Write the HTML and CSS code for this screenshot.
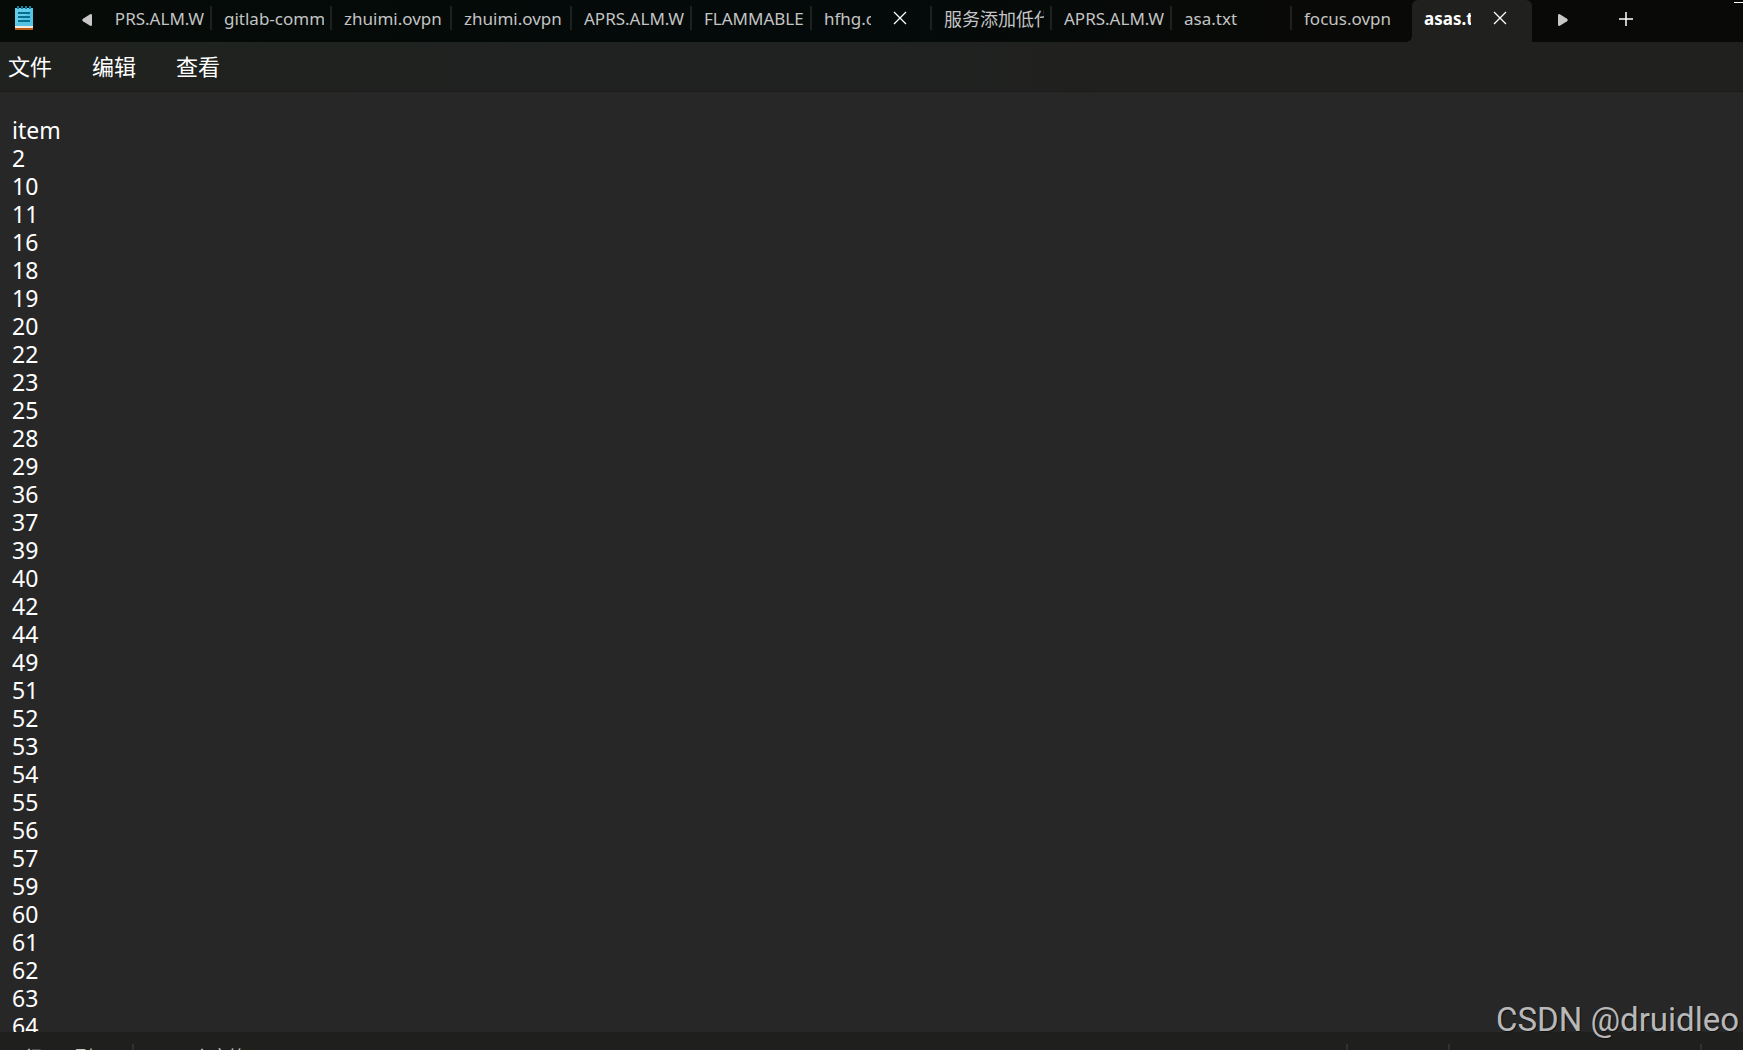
FILE: index.html
```html
<!DOCTYPE html>
<html lang="zh-CN">
<head>
  <meta charset="UTF-8" />
  <meta name="viewport" content="width=device-width, initial-scale=1" />
  <title>asas.txt</title>
  <link rel="stylesheet" href="styles.css">
</head>
<body>

<header class="titlebar">
  <div class="titlebar-left">
    <svg class="app-icon" width="18" height="24" viewBox="0 0 18 24" aria-hidden="true">
      <rect x="0" y="2" width="18" height="18" fill="#55c4e4" />
      <path d="M0 2h18L0 20z" fill="#6fd3ee" opacity="0.6" />
      <path d="M2 0h2v3H2zM6 0h2v3H6zM10 0h2v3h-2zM14 0h2v3h-2z" fill="#0c7fa3" />
      <path d="M3 6h12v2H3zM3 10h12v2H3zM3 14h12v2H3z" fill="#07708f" />
      <rect x="0" y="20" width="18" height="2" fill="#f3e9e2" />
      <rect x="0" y="22" width="18" height="2" fill="#b9560f" />
    </svg>
    <button class="icon-button" aria-label="Scroll tabs left">
      <svg width="10" height="12" viewBox="0 0 10 12"><path d="M10 1v10q0 1-1.500 1L1 7.200Q-.5 6 1 4.800L8.500 0Q10 0 10 1z" fill="#c8c8c8" /></svg>
    </button>
  </div>

  <nav class="tabs">
    <div class="tab"><button class="tab-name">APRS.ALM.WX</button></div>
    <div class="tab"><button class="tab-name">gitlab-comm</button></div>
    <div class="tab"><button class="tab-name">zhuimi.ovpn</button></div>
    <div class="tab"><button class="tab-name">zhuimi.ovpn</button></div>
    <div class="tab"><button class="tab-name">APRS.ALM.WX</button></div>
    <div class="tab"><button class="tab-name">FLAMMABLE</button></div>
    <div class="tab tab-closable">
      <button class="tab-name">hfhg.conf</button>
      <button class="icon-button" aria-label="Close hfhg">
        <svg width="14" height="14" viewBox="0 0 14 14"><path d="M1 1l12 12M13 1L1 13" stroke="#fff" stroke-width="1.300" /></svg>
      </button>
    </div>
    <div class="tab"><button class="tab-name tab-name-zh">服务添加低代</button></div>
    <div class="tab"><button class="tab-name">APRS.ALM.WX</button></div>
    <div class="tab"><button class="tab-name">asa.txt</button></div>
    <div class="tab tab-last"><button class="tab-name">focus.ovpn</button></div>
    <div class="tab tab-closable tab-active">
      <button class="tab-name">asas.txt</button>
      <button class="icon-button" aria-label="Close asas.txt">
        <svg width="14" height="14" viewBox="0 0 14 14"><path d="M1 1l12 12M13 1L1 13" stroke="#fff" stroke-width="1.300" /></svg>
      </button>
    </div>
  </nav>

  <div class="titlebar-right">
    <button class="icon-button" aria-label="Scroll tabs right">
      <svg width="10" height="12" viewBox="0 0 10 12"><path d="M0 1v10q0 1 1.500 1L9 7.200Q10.500 6 9 4.800L1.500 0Q0 0 0 1z" fill="#c8c8c8" /></svg>
    </button>
    <button class="icon-button" aria-label="New tab">
      <svg width="16" height="16" viewBox="0 0 16 16"><path d="M8 1v14M1 8h14" stroke="#fff" stroke-width="1.500" /></svg>
    </button>
    <button class="minimize" aria-label="Minimize"></button>
  </div>
</header>

<nav class="menubar">
  <button>文件</button>
  <button>编辑</button>
  <button>查看</button>
</nav>

<textarea class="editor" aria-label="asas.txt" spellcheck="false">
item
2
10
11
16
18
19
20
22
23
25
28
29
36
37
39
40
42
44
49
51
52
53
54
55
56
57
59
60
61
62
63
64</textarea>

<footer class="statusbar">
  <span class="status status-position">行 1，列 1</span>
  <span class="status status-count">1289 个字符</span>
  <span class="status status-zoom"></span>
  <span class="status status-eol"></span>
  <span class="status status-encoding"></span>
</footer>

<div class="watermark">CSDN @druidleo</div>

</body>
</html>
```
FILE: styles.css
```css
* {
  box-sizing: border-box;
}
body {
  font-family: 'Noto Sans', 'Noto Sans CJK SC', sans-serif;
  background: #272727;
  color: #fff;
  margin: 0;
  height: 100vh;
  display: flex;
  flex-direction: column;
  overflow: hidden;
}
button {
  font: inherit;
  color: inherit;
  background: none;
  border: 0;
  padding: 0;
}
.icon-button {
  display: flex;
}

/* title bar with tabs */
.titlebar {
  flex: 0 0 42px;
  display: flex;
  background: linear-gradient(to right, #060b08, #040a0a 50%, #090a07 75%, #090a07);
}
.titlebar-left {
  flex: 0 0 115px;
  display: flex;
  align-items: flex-start;
  gap: 19px;
  padding: 6px 0 0 15px;
}
.titlebar-left .icon-button {
  padding: 8px 0 8px 30px;
}
.tabs {
  flex: 1;
  min-width: 0;
  display: flex;
  justify-content: flex-end;
  overflow: hidden;
}
.tab {
  flex: 0 0 120px;
  min-width: 0;
  display: flex;
  align-items: flex-start;
  padding: 6px 8px 0 12px;
  background: linear-gradient(#1f2120, #1f2120) right 6px / 2px 24px no-repeat;
}
.tab-name {
  flex: 1;
  min-width: 0;
  overflow: hidden;
  white-space: nowrap;
  text-align: left;
  font-size: 17px;
  line-height: 26px;
  color: #c3c4c3;
}
.tab-name-zh {
  font-size: 18px;
}
.tab-closable {
  padding-right: 25px;
}
.tab-closable .tab-name {
  margin-right: 22px;
}
.tab-closable .icon-button {
  padding-top: 5px;
}
.tab-last {
  background: radial-gradient(circle at 0 0, transparent 6px, #20201e 6px) right bottom / 6px 6px no-repeat;
}
.tab-active {
  background: #20201e;
  border-radius: 6px 6px 0 0;
}
.tab-active .tab-name {
  color: #fff;
  font-weight: 700;
}
.titlebar-right {
  flex: 0 0 211px;
  display: flex;
  align-items: flex-start;
  padding-left: 26px;
}
.titlebar-right .icon-button {
  padding: 14px 50px 0 0;
}
.titlebar-right .icon-button + .icon-button {
  padding: 11px 0 0;
}
.minimize {
  width: 9px;
  height: 1px;
  margin: 2px 0 0 auto;
  background: #fff;
}

/* menu */
.menubar {
  flex: 0 0 50px;
  display: flex;
  align-items: flex-start;
  gap: 40px;
  padding: 9px 8px 0;
  background: linear-gradient(to right, #20221f, #1f2221 50%, #20201e 65%, #20201e);
  border-bottom: 1px solid #1b1b1a;
}
.menubar button {
  font-size: 22px;
  line-height: 30px;
}

/* text */
.editor {
  flex: 1;
  min-height: 0;
  width: 100%;
  margin: 0;
  padding: 24px 12px 0;
  border: 0;
  outline: 0;
  resize: none;
  overflow: hidden;
  background: #272727;
  color: #fff;
  font-family: inherit;
  font-size: 23px;
  line-height: 28px;
}

/* status bar */
.statusbar {
  flex: 0 0 18px;
  display: flex;
  padding-top: 12px;
  overflow: hidden;
  background: #1f1f1d;
  font-size: 18px;
  line-height: 26px;
  color: #c3c4c3;
}
.status {
  height: 26px;
  white-space: nowrap;
  border-left: 2px solid #313130;
}
.status-position {
  width: 132px;
  padding-left: 24px;
  border-left: 0;
}
.status-count {
  flex: 1;
  padding-left: 13px;
}
.status-zoom {
  width: 102px;
}
.status-eol {
  width: 252px;
}
.status-encoding {
  width: 43px;
}

.watermark {
  position: absolute;
  right: 4px;
  bottom: 10px;
  font-family: Roboto, sans-serif;
  font-size: 33px;
  line-height: 40px;
  color: #b8b8b8;
  text-shadow: 1px 1px 1px #111;
}
```
